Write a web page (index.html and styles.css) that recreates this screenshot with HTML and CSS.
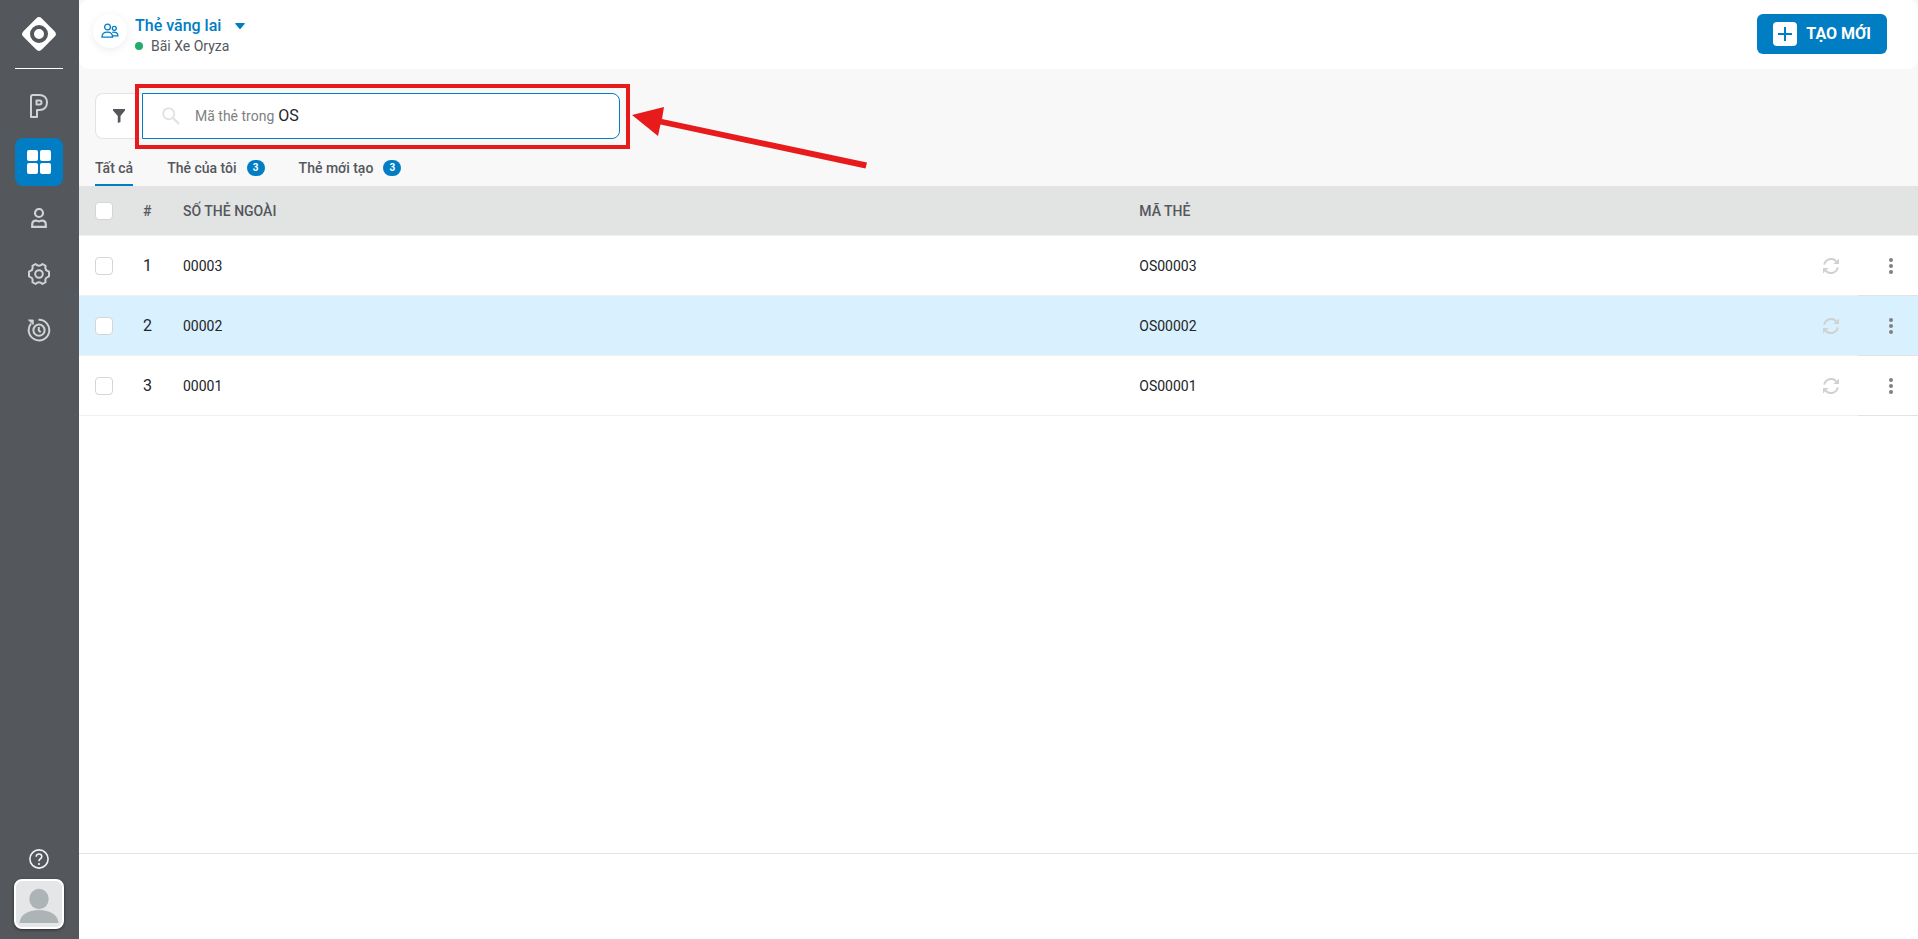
FILE: index.html
```html
<!DOCTYPE html>
<html lang="vi">
<head>
    <meta charset="UTF-8">
    <meta name="viewport" content="width=device-width, initial-scale=1.0">
    <title>Thẻ vãng lai</title>
    <link rel="stylesheet" href="styles.css">
</head>
<body>
    <svg class="defs" aria-hidden="true">
        <symbol id="sync" viewBox="0 0 16 16">
            <path d="M1.2 6.6A7 7 0 0 1 13.2 3.2" fill="none" stroke="currentColor" stroke-width="2"/>
            <path d="M16 .5V6h-5.6z" fill="currentColor"/>
            <path d="M14.8 9.4A7 7 0 0 1 2.8 12.8" fill="none" stroke="currentColor" stroke-width="2"/>
            <path d="M0 15.5V10h5.6z" fill="currentColor"/>
        </symbol>
        <symbol id="dots" viewBox="0 0 4 16">
            <circle cx="2" cy="2" r="2"/>
            <circle cx="2" cy="8" r="2"/>
            <circle cx="2" cy="14" r="2"/>
        </symbol>
    </svg>

    <nav class="sidebar">
        <a href="#" class="logo" aria-label="Oryza">
            <svg width="36" height="36" viewBox="0 0 36 36">
                <rect x="5" y="5" width="26" height="26" rx="4" fill="#fff" transform="rotate(45 18 18)"/>
                <circle cx="18" cy="18" r="7" fill="none" stroke="#54575c" stroke-width="4"/>
            </svg>
        </a>
        <div class="menu">
            <a href="#" class="menu-item" aria-label="Parking">
                <svg width="18" height="24" viewBox="0 0 18 24" fill="none" stroke="currentColor" stroke-width="2" stroke-linejoin="round">
                    <path d="M1 23V3Q1 1 3 1H9.500C14 1 17 4 17 8.500S14 16 9.500 16H7V23z"/>
                    <path d="M6.500 6.500H9.500a2 2 0 0 1 0 4H6.500z"/>
                </svg>
            </a>
            <a href="#" class="menu-item active" aria-label="Danh mục">
                <svg width="24" height="24" viewBox="0 0 24 24" fill="currentColor">
                    <rect width="11" height="11" rx="2"/>
                    <rect x="13" width="11" height="11" rx="2"/>
                    <rect y="13" width="11" height="11" rx="2"/>
                    <rect x="13" y="13" width="11" height="11" rx="2"/>
                </svg>
            </a>
            <a href="#" class="menu-item" aria-label="Người dùng">
                <svg width="16" height="20" viewBox="0 0 16 20" fill="none" stroke="currentColor" stroke-width="2.200">
                    <circle cx="8" cy="5" r="4"/>
                    <path d="M1.200 18.800v-2.300Q1.200 12.600 5 12.600Q8 14 11 12.600Q14.800 12.600 14.800 16.500V18.800z"/>
                </svg>
            </a>
            <a href="#" class="menu-item" aria-label="Cài đặt">
                <svg width="24" height="24" viewBox="0 0 24 24" fill="none" stroke="currentColor" stroke-width="2" stroke-linejoin="round">
                    <path d="M8.600 2L10 3.200Q12 4.200 14 3.200L15.400 2L18.600 3.800L18.300 6Q18.600 8.300 20.500 8.900L22 9.600V14.400L20.500 15.100Q18.600 15.700 18.300 18L18.600 20.200L15.400 22L14 20.800Q12 19.800 10 20.800L8.600 22L5.400 20.200L5.700 18Q5.400 15.700 3.500 15.100L2 14.400V9.600L3.500 8.900Q5.400 8.300 5.700 6L5.400 3.800z"/>
                    <circle cx="12" cy="12" r="3.800"/>
                </svg>
            </a>
            <a href="#" class="menu-item" aria-label="Lịch sử">
                <svg width="24" height="24" viewBox="0 0 24 24" fill="none" stroke="currentColor" stroke-width="2">
                    <path d="M11.500 1.800A10.300 10.300 0 1 1 4 5.600"/>
                    <path d="M1.500 2H6.200V6.500z" fill="currentColor" stroke-width="1"/>
                    <circle cx="12" cy="12.200" r="5.600"/>
                    <path d="M11.800 9v3.600l1.900 1.700"/>
                </svg>
            </a>
        </div>
        <a href="#" class="help" aria-label="Trợ giúp">
            <svg width="20" height="20" viewBox="0 0 20 20" fill="none" stroke="currentColor" stroke-width="1.600">
                <circle cx="10" cy="10" r="9.100"/>
                <path d="M7.200 7.800Q7.200 5 10 5T12.800 7.600Q12.800 9 11.400 9.800Q10 10.600 10 12.300"/>
                <path d="M10 14v2"/>
            </svg>
        </a>
        <a href="#" class="avatar" aria-label="Tài khoản">
            <svg width="46" height="46" viewBox="0 0 46 46" fill="#adb4b6">
                <ellipse cx="23" cy="18" rx="9.700" ry="10.200"/>
                <path d="M3.500 42C4 34 12 29 23 29S42 34 42.500 42z"/>
            </svg>
        </a>
    </nav>

    <main class="main">
        <header class="header">
            <span class="module-icon">
                <svg width="18" height="16" viewBox="0 0 18 16" fill="none" stroke="currentColor" stroke-width="1.300">
                    <circle cx="6.500" cy="4" r="2.900"/>
                    <path d="M1 14.200C1 10.800 3 9.200 6.300 9.200S11.600 10.800 11.600 14.200z"/>
                    <circle cx="13.300" cy="5.300" r="2"/>
                    <path d="M11.200 9.400C14.500 8.600 16.900 9.800 16.900 12.800H11.500"/>
                </svg>
            </span>
            <div class="heading">
                <button class="title" type="button">Thẻ vãng lai
                    <svg width="10" height="6" viewBox="0 0 10 6" fill="currentColor"><path d="M.8 0h8.400q1 .2.400 1L5.600 5.700q-.6.500-1.200 0L.4 1Q-.2.200.8 0z"/></svg>
                </button>
                <div class="site"><span class="dot"></span>Bãi Xe Oryza</div>
            </div>
            <button class="create" type="button">
                <svg width="24" height="24" viewBox="0 0 24 24"><rect width="24" height="24" rx="4" fill="#fff"/><path d="M12 5v14M5 12h14" stroke="#007dc3" stroke-width="2"/></svg>
                TẠO MỚI
            </button>
        </header>

        <section class="toolbar">
            <div class="filters">
                <button class="filter" type="button" aria-label="Bộ lọc">
                    <svg width="12" height="14" viewBox="0 0 12 14" fill="currentColor"><path d="M0 0h12v1.500L7.500 7v6L4.800 14V7L0 1.500z"/></svg>
                </button>
                <div class="search">
                    <svg width="18" height="18" viewBox="0 0 18 18" fill="none" stroke="#e2e4e3" stroke-width="2"><circle cx="6.700" cy="6.700" r="5.500"/><path d="M11 11l6 6" stroke-width="2.400"/></svg>
                    <label for="query">Mã thẻ trong</label>
                    <input id="query" type="text" value="OS">
                </div>
                <!-- highlight around the search box -->
                <div class="callout"></div>
                <svg class="arrow" width="236" height="60" viewBox="0 0 236 60" fill="#e71b1b">
                    <path d="M0 8L32 0L30 12L235 55.500L233.500 61.500L28.500 17.500L26 29z"/>
                </svg>
            </div>
            <div class="tabs">
                <a href="#" class="tab current">Tất cả</a>
                <a href="#" class="tab">Thẻ của tôi <span class="badge">3</span></a>
                <a href="#" class="tab">Thẻ mới tạo <span class="badge">3</span></a>
            </div>
        </section>

        <div class="content">
            <table class="cards">
                <colgroup>
                    <col class="col-check">
                    <col class="col-index">
                    <col class="col-number">
                    <col>
                    <col class="col-action">
                    <col class="col-action">
                </colgroup>
                <thead>
                    <tr>
                        <th><input type="checkbox" aria-label="Chọn tất cả"></th>
                        <th>#</th>
                        <th>SỐ THẺ NGOÀI</th>
                        <th>MÃ THẺ</th>
                        <th></th>
                        <th></th>
                    </tr>
                </thead>
                <tbody>
                    <tr>
                        <td><input type="checkbox" aria-label="Chọn 00003"></td>
                        <td class="index">1</td>
                        <td>00003</td>
                        <td>OS00003</td>
                        <td class="action"><button class="sync" type="button" aria-label="Đồng bộ"><svg width="16" height="16"><use href="#sync"/></svg></button></td>
                        <td class="action more"><button type="button" aria-label="Thêm"><svg width="4" height="16"><use href="#dots"/></svg></button></td>
                    </tr>
                    <tr class="hovered">
                        <td><input type="checkbox" aria-label="Chọn 00002"></td>
                        <td class="index">2</td>
                        <td>00002</td>
                        <td>OS00002</td>
                        <td class="action"><button class="sync" type="button" aria-label="Đồng bộ"><svg width="16" height="16"><use href="#sync"/></svg></button></td>
                        <td class="action more"><button type="button" aria-label="Thêm"><svg width="4" height="16"><use href="#dots"/></svg></button></td>
                    </tr>
                    <tr>
                        <td><input type="checkbox" aria-label="Chọn 00001"></td>
                        <td class="index">3</td>
                        <td>00001</td>
                        <td>OS00001</td>
                        <td class="action"><button class="sync" type="button" aria-label="Đồng bộ"><svg width="16" height="16"><use href="#sync"/></svg></button></td>
                        <td class="action more"><button type="button" aria-label="Thêm"><svg width="4" height="16"><use href="#dots"/></svg></button></td>
                    </tr>
                </tbody>
            </table>
        </div>

        <footer class="footer"></footer>
    </main>
</body>
</html>
```
FILE: styles.css
```css
* {
    box-sizing: border-box;
}

body {
    margin: 0;
    display: flex;
    min-height: 100vh;
    font-family: Roboto, sans-serif;
    font-size: 14px;
    line-height: 20px;
    color: #212529;
    background: #fff;
}

button,
input {
    font: inherit;
    color: inherit;
}

button {
    padding: 0;
    border: 0;
    background: none;
    cursor: pointer;
}

a {
    color: inherit;
    text-decoration: none;
}

svg {
    display: block;
    flex: none;
}

.defs {
    position: absolute;
    width: 0;
    height: 0;
}

/* Sidebar */
.sidebar {
    flex: none;
    width: 79px;
    padding: 16px 15px 10px 14px;
    display: flex;
    flex-direction: column;
    align-items: center;
    background: #54575c;
    color: #d0d2d3;
}

.logo {
    width: 48px;
    padding: 0 6px 16px;
    margin-bottom: 13px;
    border-bottom: 1px solid #fff;
}

.menu {
    display: flex;
    flex-direction: column;
    gap: 8px;
}

.menu-item {
    width: 48px;
    height: 48px;
    display: flex;
    align-items: center;
    justify-content: center;
    border-radius: 8px;
}

.menu-item.active {
    background: #007dc3;
    color: #fff;
}

.help {
    margin-top: auto;
    margin-bottom: 10px;
    color: #f1f1f1;
}

.avatar {
    border: 2px solid #fff;
    border-radius: 8px;
    background: #e4e6e8;
    box-shadow: 0 1px 3px rgba(0, 0, 0, 0.5);
}

/* Header */
.main {
    flex: 1;
    min-width: 0;
    display: flex;
    flex-direction: column;
    background: #f8f8f8;
}

.header {
    height: 69px;
    padding: 14px 31px 14px 14px;
    display: flex;
    align-items: flex-start;
    background: #fff;
    border-radius: 10px;
}

.module-icon {
    width: 34px;
    height: 34px;
    display: flex;
    align-items: center;
    justify-content: center;
    border-radius: 50%;
    color: #007dc3;
    box-shadow: 0 2px 8px rgba(0, 0, 0, 0.08);
}

.heading {
    margin-left: 8px;
}

.title {
    display: flex;
    align-items: center;
    gap: 14px;
    height: 24px;
    font-size: 16px;
    font-weight: 500;
    color: #007dc3;
}

.site {
    display: flex;
    align-items: center;
    gap: 8px;
    height: 16px;
    color: #54575c;
}

.dot {
    width: 8px;
    height: 8px;
    border-radius: 50%;
    background: #22ae68;
}

.create {
    height: 40px;
    padding: 0 16px;
    margin-left: auto;
    display: flex;
    align-items: center;
    gap: 9px;
    border-radius: 6px;
    background: #007dc3;
    color: #fff;
    font-size: 16px;
    font-weight: 700;
}

/* Search and tabs */
.toolbar {
    padding: 24px 16px 0;
}

.filters {
    position: relative;
    display: flex;
    width: 525px;
    height: 46px;
}

.filter {
    width: 47px;
    padding-left: 17px;
    border: 1px solid #e2e4e3;
    border-right: 0;
    border-radius: 8px 0 0 8px;
    background: #fff;
    color: #54575c;
}

.search {
    flex: 1;
    padding-left: 19px;
    display: flex;
    align-items: center;
    border: 1px solid #007dc3;
    border-radius: 0 8px 8px 0;
    background: #fff;
}

.search label {
    margin: 0 4px 0 15px;
    color: #7f7f7f;
}

.search input {
    flex: 1;
    min-width: 0;
    padding: 0;
    border: 0;
    outline: 0;
    background: none;
    font-size: 16px;
}

.callout {
    position: absolute;
    inset: -9px -10px -10px 40px;
    border: 4px solid #e71b1b;
}

.arrow {
    position: absolute;
    top: 14px;
    left: 537px;
    overflow: visible;
}

.tabs {
    display: flex;
    gap: 34px;
    margin-top: 11px;
}

.tab {
    height: 36px;
    display: flex;
    align-items: center;
    gap: 10px;
    padding-top: 1px;
    border-bottom: 2px solid transparent;
    font-weight: 500;
    color: #54575c;
}

.tab.current {
    border-color: #007dc3;
}

.badge {
    width: 18px;
    height: 16px;
    border-radius: 8px;
    background: #007dc3;
    color: #fff;
    font-size: 10px;
    font-weight: 700;
    line-height: 16px;
    text-align: center;
}

/* Table */
.content {
    flex: 1;
    background: #fff;
}

.cards {
    width: 100%;
    table-layout: fixed;
    border-collapse: separate;
    border-spacing: 0;
}

.col-check {
    width: 48px;
}

.col-index {
    width: 40px;
}

.col-number {
    width: 52%;
}

.col-action {
    width: 60px;
}

.cards th,
.cards td {
    padding: 0 0 0 16px;
    border-bottom: 1px solid #f1f1f1;
    text-align: left;
}

.cards th {
    height: 50px;
    background: #e2e4e3;
    color: #54575c;
    font-weight: 500;
}

.cards td {
    height: 60px;
}

.cards .index {
    font-size: 16px;
}

.cards .action {
    padding: 0 0 0 6px;
}

.cards .more {
    border-color: #e2e4e3;
}

.cards button {
    margin: 0 auto;
    display: block;
    fill: #808080;
}

.cards .sync {
    color: #cfd2d1;
}

.hovered {
    background: #d9f0fe;
}

.cards input {
    appearance: none;
    display: block;
    width: 18px;
    height: 18px;
    margin: 0;
    border: 1px solid #d3d5d6;
    border-radius: 4px;
    background: #fff;
}

.footer {
    height: 86px;
    border-top: 1px solid #e2e4e3;
    background: #fff;
}
```
